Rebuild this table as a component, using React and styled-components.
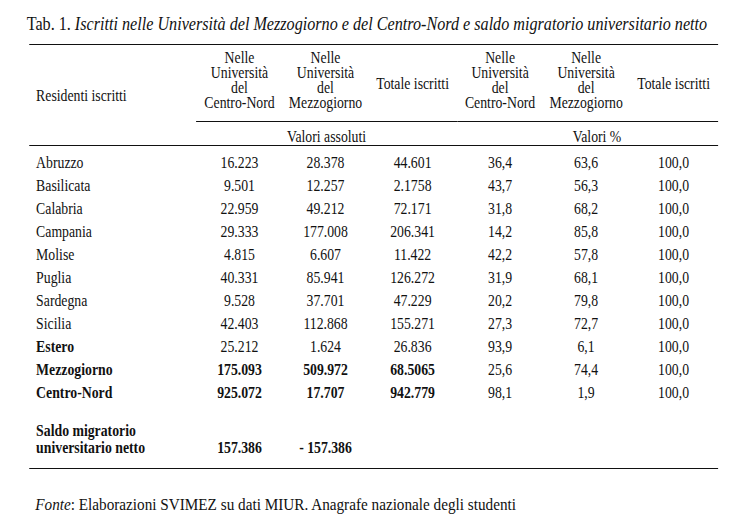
import React from "react";
import styled, { createGlobalStyle } from "styled-components";

// the reference is a horizontally squeezed scan, so the page is laid out
// wide and squeezed back with scaleX. All widths below are pre-scale.
const SQUEEZE = 0.86;

const GlobalStyle = createGlobalStyle`
  html, body {
    margin: 0;
    padding: 0;
    background: #ffffff;
  }
  body {
    font-family: "Liberation Serif", "Times New Roman", serif;
    color: #111111;
    overflow: hidden;
  }
`;

const Page = styled.div`
  width: ${731 / SQUEEZE}px;
  transform: scaleX(${SQUEEZE});
  transform-origin: 0 0;
  font-size: 16px;
`;

const Caption = styled.div`
  padding: 13px 0 0 31px;
  margin-bottom: 10px;
  line-height: 21px;
  font-size: 18.8px;
  white-space: nowrap;

  em {
    font-style: italic;
  }
`;

const Table = styled.div`
  margin-left: 34px;
  width: 801px;
  display: flex;
  flex-direction: column;
`;

const cols = "194px 101px 99px 103.5px 100px 100px 103.5px";

const HeadRow = styled.div`
  display: grid;
  grid-template-columns: ${cols};
  height: 76px;
  border-top: 1px solid #111;
`;

const HeadCell = styled.div`
  text-align: ${(p) => (p.$left ? "left" : "center")};
  padding-left: ${(p) => (p.$left ? "8px" : "0")};
  line-height: 15px;
  align-self: ${(p) => p.$align || "center"};
  padding-top: ${(p) => p.$top || 0}px;
  padding-bottom: ${(p) => p.$bottom || 0}px;
  white-space: nowrap;
`;

const UnitRow = styled.div`
  display: grid;
  grid-template-columns: ${cols};
  height: 24px;
  border-bottom: 1px solid #111;
`;

const UnitCell = styled.div`
  grid-column: ${(p) => p.$span};
  border-top: 1px solid #111;
  text-align: center;
  line-height: 18px;
  padding-top: 6px;
  padding-left: ${(p) => p.$shift || 0}px;
`;

const Body = styled.div`
  padding-top: 5px;
  display: flex;
  flex-direction: column;
`;

const Row = styled.div`
  display: grid;
  grid-template-columns: ${cols};
  height: 23px;
  align-items: center;
  line-height: 18px;
`;

const Label = styled.div`
  padding-left: 8px;
  font-weight: ${(p) => (p.$bold ? 700 : 400)};
  white-space: nowrap;
`;

const Num = styled.div`
  text-align: center;
  font-weight: ${(p) => (p.$bold ? 700 : 400)};
  white-space: nowrap;
`;

const SaldoRow = styled.div`
  display: grid;
  grid-template-columns: ${cols};
  align-items: end;
  line-height: 17px;
  padding: 18px 0 12px;
  border-bottom: 1px solid #111;
  font-weight: 700;
`;

const Source = styled.div`
  padding-left: 41px;
  margin-top: 25px;
  line-height: 20px;
  font-size: 17.7px;
  white-space: nowrap;

  em {
    font-style: italic;
  }
`;

const regions = [
  ["Abruzzo", "16.223", "28.378", "44.601", "36,4", "63,6", "100,0"],
  ["Basilicata", "9.501", "12.257", "2.1758", "43,7", "56,3", "100,0"],
  ["Calabria", "22.959", "49.212", "72.171", "31,8", "68,2", "100,0"],
  ["Campania", "29.333", "177.008", "206.341", "14,2", "85,8", "100,0"],
  ["Molise", "4.815", "6.607", "11.422", "42,2", "57,8", "100,0"],
  ["Puglia", "40.331", "85.941", "126.272", "31,9", "68,1", "100,0"],
  ["Sardegna", "9.528", "37.701", "47.229", "20,2", "79,8", "100,0"],
  ["Sicilia", "42.403", "112.868", "155.271", "27,3", "72,7", "100,0"],
  ["Estero", "25.212", "1.624", "26.836", "93,9", "6,1", "100,0", "label"],
  ["Mezzogiorno", "175.093", "509.972", "68.5065", "25,6", "74,4", "100,0", "abs"],
  ["Centro-Nord", "925.072", "17.707", "942.779", "98,1", "1,9", "100,0", "abs"],
];

const Nelle = ({ where }) => (
  <HeadCell $align="start" $top={5}>
    Nelle
    <br />
    Università
    <br />
    del
    <br />
    {where}
  </HeadCell>
);

export default function App() {
  return (
    <Page>
      <GlobalStyle />
      <Caption>
        Tab. 1. <em>Iscritti nelle Università del Mezzogiorno e del Centro-Nord e saldo migratorio universitario netto</em>
      </Caption>
      <Table>
        <HeadRow>
          <HeadCell $left $align="end" $bottom={18}>
            Residenti iscritti
          </HeadCell>
          <Nelle where="Centro-Nord" />
          <Nelle where="Mezzogiorno" />
          <HeadCell>Totale iscritti</HeadCell>
          <Nelle where="Centro-Nord" />
          <Nelle where="Mezzogiorno" />
          <HeadCell>Totale iscritti</HeadCell>
        </HeadRow>
        <UnitRow>
          <UnitCell $span="2 / span 3">Valori assoluti</UnitCell>
          <UnitCell $span="5 / span 3" $shift={22}>
            Valori %
          </UnitCell>
        </UnitRow>
        <Body>
          {regions.map((r) => {
            const bold = r[7];
            return (
              <Row key={r[0]}>
                <Label $bold={!!bold}>{r[0]}</Label>
                {r.slice(1, 7).map((v, i) => (
                  <Num key={i} $bold={bold === "abs" && i < 3}>
                    {v}
                  </Num>
                ))}
              </Row>
            );
          })}
        </Body>
        <SaldoRow>
          <Label $bold>
            Saldo migratorio
            <br />
            universitario netto
          </Label>
          <Num $bold>157.386</Num>
          <Num $bold>- 157.386</Num>
        </SaldoRow>
      </Table>
      <Source>
        <em>Fonte</em>: Elaborazioni SVIMEZ su dati MIUR. Anagrafe nazionale degli studenti
      </Source>
    </Page>
  );
}
